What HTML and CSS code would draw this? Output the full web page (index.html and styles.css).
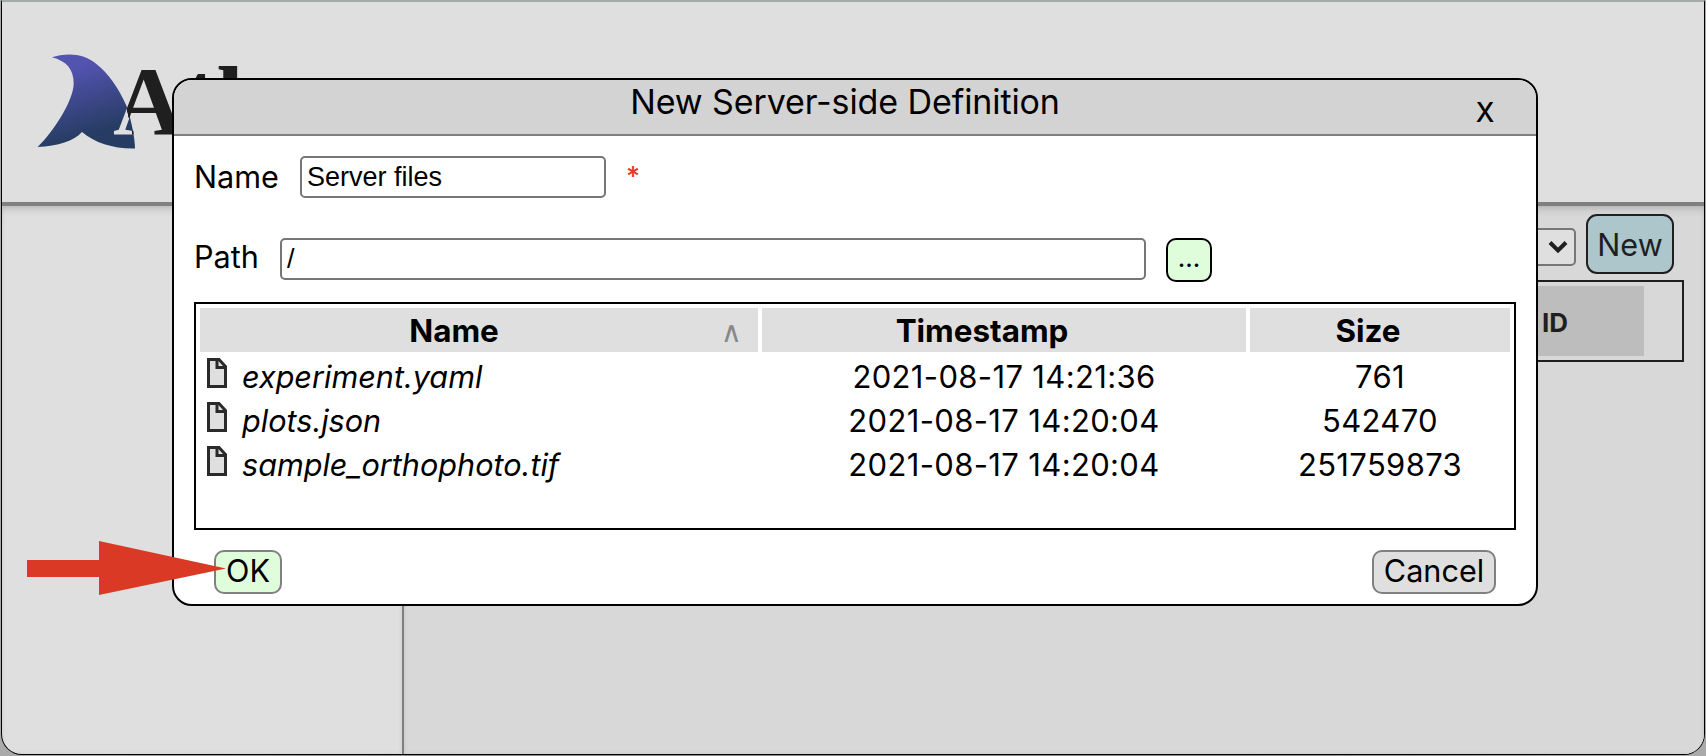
FILE: index.html
```html
<!DOCTYPE html>
<html lang="en">
<head>
<meta charset="utf-8">
<title>Atlana</title>
<link rel="stylesheet" href="styles.css">
</head>
<body>
<div class="window">
  <header class="banner">
    <svg class="logo" viewBox="0 0 240 110" width="240" height="110">
      <defs>
        <linearGradient id="fin" x1="0.3" y1="0" x2="0.6" y2="1">
          <stop offset="0.15" stop-color="#5353b0"/>
          <stop offset="0.85" stop-color="#263c62"/>
        </linearGradient>
        <linearGradient id="lettering" gradientUnits="userSpaceOnUse" x1="84.500" y1="50" x2="89.300" y2="48.900">
          <stop offset="0" stop-color="#dfdfdf"/>
          <stop offset="0.1" stop-color="#1f1f1f"/>
        </linearGradient>
      </defs>
      <path fill="url(#fin)" d="M12 6.300C24 2 44 1 57 13.500C68 22 78 36 87 56C92 72 95 88 95 97.500C74 98 55 92 42 81C34 90 18 95 -2.300 96C14 80 33 50 33.700 33C34 18 26 10 12 6.300Z"/>
      <text class="logo-text" x="73" y="83" fill="url(#lettering)">A<tspan dy="-5">t</tspan><tspan dy="5">lana</tspan></text>
    </svg>
  </header>
  <div class="content">
    <aside class="sidebar"></aside>
    <main class="workspace">
      <div class="toolbar">
        <div class="select"><svg width="20" height="14" viewBox="0 0 20 14"><path d="M2 2.500L10 10.500L18 2.500" fill="none" stroke="#1f1f1f" stroke-width="4"/></svg></div>
        <button class="new-button">New</button>
      </div>
      <div class="results"><div class="results-cell">ID</div></div>
    </main>
  </div>
</div>

<section class="dialog">
  <div class="dialog-title"><span class="title-text">New Server-side Definition</span><button class="close">X</button></div>
  <div class="dialog-body">
    <div class="row row-name"><span class="label label-name">Name</span><input class="field field-name" value="Server files"><span class="required">*</span></div>
    <div class="row row-path"><span class="label label-path">Path</span><input class="field field-path" value="/"><button class="browse">...</button></div>
    <div class="files">
      <div class="cell head head-name">Name<span class="sort">∧</span></div><div class="cell head head-time">Timestamp</div><div class="cell head head-size">Size</div>
      <div class="cell file"><svg class="doc" viewBox="0 0 20 30"><path d="M1.500 1.500H12L18.500 8.500V28.500H1.500Z" fill="#dfdfdf" stroke="#2a2a2a" stroke-width="3"/><path d="M10 1V9.500H19" fill="none" stroke="#2a2a2a" stroke-width="3"/></svg>experiment.yaml</div><div class="cell">2021-08-17 14:21:36</div><div class="cell">761</div>
      <div class="cell file"><svg class="doc" viewBox="0 0 20 30"><path d="M1.500 1.500H12L18.500 8.500V28.500H1.500Z" fill="#dfdfdf" stroke="#2a2a2a" stroke-width="3"/><path d="M10 1V9.500H19" fill="none" stroke="#2a2a2a" stroke-width="3"/></svg>plots.json</div><div class="cell">2021-08-17 14:20:04</div><div class="cell">542470</div>
      <div class="cell file"><svg class="doc" viewBox="0 0 20 30"><path d="M1.500 1.500H12L18.500 8.500V28.500H1.500Z" fill="#dfdfdf" stroke="#2a2a2a" stroke-width="3"/><path d="M10 1V9.500H19" fill="none" stroke="#2a2a2a" stroke-width="3"/></svg>sample_orthophoto.tif</div><div class="cell">2021-08-17 14:20:04</div><div class="cell">251759873</div>
    </div>
    <div class="actions"><button class="action ok">OK</button><button class="action cancel">Cancel</button></div>
  </div>
</section>

<svg class="pointer" viewBox="0 0 200 54" width="200" height="54"><path fill="#da3926" d="M0 19H72V0L199 27.500L72 54V36H0Z"/></svg>
</body>
</html>
```

FILE: styles.css
```css
* { box-sizing: border-box; }
body {
  margin: 0;
  height: 756px;
  overflow: hidden;
  background: linear-gradient(90deg, #aaa, #888 30%, #888 70%, #aaa);
  font-family: Inter, "Liberation Sans", sans-serif;
  font-size: 30.6px;
  color: #000;
}
button, input { font: inherit; color: inherit; margin: 0; padding: 0; }
.window {
  margin-left: 1px;
  width: 1704px;
  height: 755px;
  border: 1px solid #000;
  border-top: 2px solid #a5abaa;
  border-radius: 0 0 21px 21px;
  overflow: hidden;
  background: #dfdfdf;
  display: flex;
  flex-direction: column;
}
.banner {
  height: 204px;
  flex: none;
  border-bottom: 4px solid #808080;
  padding: 49px 0 0 38px;
}
.logo { display: block; overflow: visible; }
.logo-text { font: bold 98px "Liberation Serif", serif; }
.content { flex: 1; display: flex; }
.sidebar, .workspace {
  box-shadow: inset 0 8px 10px -6px rgba(0, 0, 0, 0.18), inset 0 0 5px rgba(0, 0, 0, 0.06);
}
.sidebar { width: 402px; border-right: 2px solid #808080; }
.workspace {
  flex: 1;
  background: #d8d8d8;
  padding: 8px 20px 0 0;
}
.toolbar { display: flex; justify-content: flex-end; align-items: center; gap: 10px; padding-right: 10px; height: 60px; }
.select {
  width: 120px;
  height: 38px;
  margin-top: 6px;
  border: 2px solid #767676;
  border-radius: 5px;
  background: #dfdfdf;
  display: flex;
  align-items: center;
  justify-content: flex-end;
  padding-right: 6px;
}
.new-button {
  width: 88px;
  height: 60px;
  border: 2px solid #1f1f1f;
  border-radius: 11px;
  background: #adc6cb;
  color: #1f1f1f;
}
.results {
  margin: 6px 0 0 20px;
  height: 82px;
  border: 2px solid #1f1f1f;
  padding: 4px 38px 4px 4px;
}
.results-cell {
  height: 70px;
  background: #bdbdbd;
  color: #1f1f1f;
  font-size: 26px;
  font-weight: 700;
  line-height: 74px;
  text-align: right;
  padding-right: 76px;
}
.dialog {
  position: absolute;
  left: 172px;
  top: 78px;
  width: 1366px;
  height: 528px;
  border: 2px solid #000;
  border-radius: 20px;
  background: #fff;
  overflow: hidden;
}
.dialog-title {
  height: 56px;
  background: #d3d3d3;
  border-bottom: 2px solid #808080;
  display: flex;
  padding-right: 31px;
}
.title-text { flex: 1; text-align: center; font-size: 34px; letter-spacing: -0.1px; line-height: 43px; padding-left: 51px; }
.close {
  width: 40px;
  height: 56px;
  border: 0;
  background: none;
  font-size: 26.5px;
  font-weight: 500;
  padding-top: 7px;
}
.dialog-body { padding: 20px 20px 0; }
.row { display: flex; align-items: flex-start; }
.row-name { height: 42px; }
.row-path { height: 44px; margin-top: 40px; margin-bottom: 20px; }
.label { line-height: 42px; }
.label-name { width: 86px; }
.label-path { width: 66px; line-height: 38px; }
.field {
  height: 42px;
  border: 2px solid #767676;
  border-radius: 5px;
  font-family: "Liberation Sans", Arial, sans-serif;
  font-size: 27px;
  padding: 0 5px;
  background: #fff;
}
.field-name { width: 306px; margin-left: 20px; }
.field-path { width: 866px; margin-left: 20px; }
.required { color: #ee3524; font-size: 27px; font-weight: 500; line-height: 41px; margin-left: 20px; }
.browse {
  margin-left: 20px;
  width: 46px;
  height: 44px;
  border: 2px solid #000;
  border-radius: 10px;
  background: #dffddb;
  font-size: 26px;
  padding-bottom: 5px;
}
.files {
  height: 228px;
  border: 2px solid #000;
  padding: 4px;
  display: grid;
  grid-template-columns: 558px 484px 260px;
  column-gap: 4px;
  grid-auto-rows: 44px;
  align-content: start;
}
.cell {
  text-align: center;
  font-size: 31px;
  letter-spacing: 0.35px;
  line-height: 44px;
  height: 44px;
  padding-top: 3px;
  white-space: nowrap;
}
.head { position: relative; background: #dfdfdf; font-weight: 700; font-size: 31.4px; letter-spacing: 0; padding-top: 1px; }
.head-name { padding-right: 50px; }
.head-time { padding-right: 44px; }
.head-size { padding-right: 24px; }
.file { text-align: left; font-style: italic; font-size: 30.6px; letter-spacing: 0; padding-left: 7px; display: flex; align-items: flex-start; }
.doc { width: 20px; height: 30px; margin: 3px 15px 0 0; flex: none; }
.sort { font-family: "DejaVu Sans", sans-serif; font-weight: 400; font-size: 29px; color: #888; position: absolute; right: 16px; top: 2px; }
.actions { display: flex; justify-content: space-between; padding: 20px 20px 0; }
.action { height: 44px; border: 2px solid #808080; border-radius: 10px; padding-bottom: 4px; }
.ok { width: 68px; background: #dffddb; }
.cancel { width: 124px; background: #dfdfdf; }
.pointer { position: absolute; left: 27px; top: 541px; }
```
